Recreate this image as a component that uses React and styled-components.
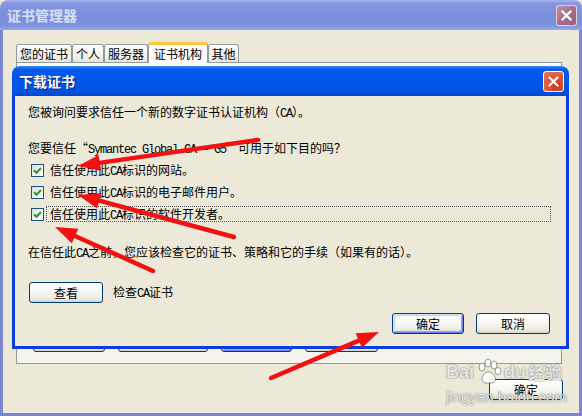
import React from 'react'
import styled, { createGlobalStyle } from 'styled-components'

const GlobalStyle = createGlobalStyle`
  html, body {
    margin: 0;
    padding: 0;
  }
  body {
    width: 582px;
    height: 416px;
    overflow: hidden;
    font-family: "Noto Sans CJK SC", "Noto Sans", sans-serif;
    font-size: 12px;
    color: #000;
  }
`

const Window = styled.div`
    position: relative;
    width: 582px;
    height: 416px;
    display: flex;
    flex-direction: column;
    background-color: #ECE9D8;
    overflow: hidden;
`
const TitleBar = styled.div`
    height: 30px;
    flex-shrink: 0;
    display: flex;
    align-items: center;
    justify-content: space-between;
    padding: 0 5px 0 7px;
    border-radius: 8px 8px 0 0;
    box-sizing: border-box;
    background: ${props => props.$active
        ? 'linear-gradient(to bottom, #3D8CF6 0%, #0A5CEA 10%, #0058EE 25%, #0055E5 60%, #0053E1 85%, #0046CC 100%)'
        : 'linear-gradient(to bottom, #AAB8EE 0%, #8597E1 10%, #7B8EDC 50%, #7E92DE 85%, #95A9EA 100%)'};
`
const TitleText = styled.span`
    font-size: 14px;
    font-weight: bold;
    color: ${props => props.$active ? '#FFFFFF' : '#D8E1F8'};
    text-shadow: ${props => props.$active ? '1px 1px 0 #0A1C83' : 'none'};
`
const CloseButton = styled.div`
    width: 21px;
    height: 21px;
    box-sizing: border-box;
    border: 1px solid ${props => props.$active ? '#FFFFFF' : 'rgba(255,255,255,0.65)'};
    border-radius: 3px;
    display: flex;
    align-items: center;
    justify-content: center;
    background: ${props => props.$active
        ? 'radial-gradient(circle at 70% 75%, #C83A1B 0%, #DD5535 50%, #E8805F 100%)'
        : 'linear-gradient(135deg, #C190A6 0%, #A86B88 55%, #97607E 100%)'};
`
const Frame = styled.div`
    flex: 1;
    display: flex;
    flex-direction: column;
    border: solid #7D86D3;
    border-width: 0 3px 3px 3px;
    padding: 12px 17px 0 13px;
`
const TabStrip = styled.div`
    display: flex;
    align-items: flex-end;
    height: 20px;
    position: relative;
    z-index: 1;
`
const Tab = styled.div`
    width: ${props => props.$w}px;
    height: ${props => props.$active ? 21 : 18}px;
    box-sizing: border-box;
    display: flex;
    align-items: center;
    justify-content: center;
    border: 1px solid #919B9C;
    border-bottom: none;
    border-top: ${props => props.$active ? '3px solid #FFC73C' : '1px solid #919B9C'};
    border-radius: 3px 3px 0 0;
    margin-bottom: ${props => props.$active ? -1 : 0}px;
    background: ${props => props.$active ? '#FCFCFE' : 'linear-gradient(to bottom, #FFFFFF 0%, #F3F2EE 60%, #E6E4DC 100%)'};
    font-size: 12px;
    line-height: 14px;
    padding-top: ${props => props.$active ? 0 : 1}px;
`
const Panel = styled.div`
    height: 302px;
    box-sizing: border-box;
    border: 1px solid #919B9C;
    background: linear-gradient(to bottom, #FCFCFE 0%, #F8F8F6 40%, #F4F3EE 100%);
    display: flex;
    align-items: flex-end;
    gap: 13px;
    padding: 0 0 11px 16px;
`
const Footer = styled.div`
    display: flex;
    justify-content: flex-end;
    padding-top: 15px;
    margin-right: -1px;
`
const Button = styled.div`
    width: ${props => props.$w}px;
    height: 21px;
    flex-shrink: 0;
    box-sizing: border-box;
    display: flex;
    align-items: center;
    justify-content: center;
    border: 1px solid #003C74;
    border-radius: 3px;
    font-size: 12px;
    line-height: 14px;
    background: linear-gradient(to bottom, #FFFFFF 0%, #F8F8F5 35%, #F0EFEA 75%, #E3E0D6 92%, #D6D0C5 100%);
    box-shadow: ${props => props.$default
        ? 'inset 1px 1px 0 #CEE7FF, inset -1px -1px 0 #6982EE, inset 2px 2px 0 #BCD4F6, inset -2px -2px 0 #8AAEE6'
        : 'none'};
`
const Dialog = styled.div`
    position: absolute;
    left: 12px;
    top: 66px;
    width: 557px;
    height: 283px;
    display: flex;
    flex-direction: column;
    z-index: 5;
`
const DialogFrame = styled.div`
    flex: 1;
    display: flex;
    flex-direction: column;
    background-color: #ECE9D8;
    border: solid #0A3DD9;
    border-width: 0 3px 3px 3px;
    padding: 9px 15px 0 13px;
`
const Para = styled.p`
    margin: ${props => props.$top || 0}px 0 0 0;
    height: 14px;
    flex-shrink: 0;
    line-height: 14px;
    white-space: nowrap;
`
const Latin = styled.span`
    font-family: "Liberation Mono", monospace;
    font-size: 12px;
    line-height: 1;
    letter-spacing: -1.2px;
`
const CheckList = styled.div`
    margin-top: 4px;
    display: flex;
    flex-direction: column;
    flex-shrink: 0;
`
const CheckRow = styled.div`
    height: 22px;
    flex-shrink: 0;
    display: flex;
    align-items: center;
    padding-left: 3px;
`
const Box = styled.div`
    width: 13px;
    height: 13px;
    box-sizing: border-box;
    border: 1px solid #1C5180;
    background: linear-gradient(135deg, #DCDCD7 0%, #F4F4F0 60%, #FFFFFF 100%);
    display: flex;
    align-items: center;
    justify-content: center;
`
const CheckLabel = styled.div`
    flex: 1;
    height: 16px;
    box-sizing: border-box;
    margin-left: 2px;
    padding: 0 3px;
    line-height: 14px;
    overflow: hidden;
    border: 1px dotted ${props => props.$focus ? '#555' : 'transparent'};
`
const ViewRow = styled.div`
    margin-top: 23px;
    height: 21px;
    flex-shrink: 0;
    display: flex;
    align-items: center;
    gap: 10px;
    padding-left: 1px;
    line-height: 14px;
`
const ActionRow = styled.div`
    margin-top: 10px;
    display: flex;
    justify-content: flex-end;
    gap: 12px;
    padding-right: 1px;
`
const Overlay = styled.svg`
    position: absolute;
    left: 0;
    top: 0;
    width: 582px;
    height: 416px;
    pointer-events: none;
    z-index: 10;
`
const Watermark = styled.div`
    position: absolute;
    left: 446px;
    top: 357px;
    z-index: 8;
    display: flex;
    flex-direction: column;
    color: rgba(255, 255, 255, 0.85);
    text-shadow: 0 0 1px rgba(90, 90, 90, 0.9), 0 0 2px rgba(120, 120, 120, 0.5);
    pointer-events: none;
`
const MarkTop = styled.div`
    display: flex;
    align-items: center;
    font-family: "Liberation Sans", sans-serif;
    font-weight: bold;
    font-size: 18px;
    line-height: 30px;
`
const MarkCn = styled.span`
    font-family: "Noto Sans CJK SC", sans-serif;
    font-size: 17px;
    font-weight: bold;
    margin-left: 2px;
`
const MarkUrl = styled.div`
    font-family: "Liberation Sans", sans-serif;
    font-size: 15px;
    line-height: 14px;
    margin-top: 3px;
`

const XIcon = () => (
    <svg width="11" height="11" viewBox="0 0 11 11">
        <path d="M1.5 1.5 L9.5 9.5 M9.5 1.5 L1.5 9.5" stroke="#fff" strokeWidth="2.2" strokeLinecap="square" />
    </svg>
)

const Check = () => (
    <svg width="9" height="9" viewBox="0 0 9 9">
        <path d="M1 4.2 L3.5 6.8 L8 2" stroke="#21A121" strokeWidth="2" fill="none" />
    </svg>
)

const Paw = () => (
    <svg width="30" height="30" viewBox="0 0 30 30">
        <g fill="rgba(255,255,255,0.85)" stroke="rgba(100,100,100,0.7)" strokeWidth="0.9">
            <ellipse cx="8" cy="10" rx="3" ry="4" />
            <ellipse cx="14" cy="6" rx="3" ry="4" />
            <ellipse cx="20" cy="8" rx="3" ry="4" />
            <ellipse cx="24" cy="14" rx="3" ry="3.5" />
            <path d="M8 22 C8 15 16 13 19 17 C22 20 23 26 17 26 C13 26 8 27 8 22 Z" />
        </g>
    </svg>
)

const arrows = [
    { from: [258, 140], to: [78, 166] },
    { from: [234, 237], to: [78, 195] },
    { from: [153, 271], to: [55, 227] },
    { from: [271, 378], to: [379, 332] },
]

const Arrow = ({ from, to }) => {
    const dx = to[0] - from[0]
    const dy = to[1] - from[1]
    const len = Math.sqrt(dx * dx + dy * dy)
    const ux = dx / len
    const uy = dy / len
    const headLen = 22
    const half = 8
    const bx = to[0] - ux * headLen
    const by = to[1] - uy * headLen
    const p1 = [bx - uy * half, by + ux * half]
    const p2 = [bx + uy * half, by - ux * half]
    return (
        <g>
            <line x1={from[0]} y1={from[1]} x2={bx + ux * 2} y2={by + uy * 2} stroke="#F21010" strokeWidth="4.5" strokeLinecap="round" />
            <polygon points={`${to[0]},${to[1]} ${p1[0]},${p1[1]} ${p2[0]},${p2[1]}`} fill="#F21010" />
        </g>
    )
}

const tabs = [
    { label: '您的证书', w: 56 },
    { label: '个人', w: 32 },
    { label: '服务器', w: 44 },
    { label: '证书机构', w: 60, active: true },
    { label: '其他', w: 31 },
]

const purposes = [
    '的网站。',
    '的电子邮件用户。',
    '的软件开发者。',
]

const App = () => {
  return (
    <Window>
        <GlobalStyle />
        <TitleBar>
            <TitleText>证书管理器</TitleText>
            <CloseButton><XIcon /></CloseButton>
        </TitleBar>
        <Frame>
            <TabStrip>
                {tabs.map(t => (
                    <Tab key={t.label} $w={t.w} $active={t.active}>{t.label}</Tab>
                ))}
            </TabStrip>
            <Panel>
                <Button $w={72}>导入</Button>
                <Button $w={90}>导出</Button>
                <Button $w={71} $default>删除</Button>
                <Button $w={73}>高级</Button>
            </Panel>
            <Footer>
                <Button $w={74}>确定</Button>
            </Footer>
        </Frame>

        <Dialog>
            <TitleBar $active>
                <TitleText $active>下载证书</TitleText>
                <CloseButton $active><XIcon /></CloseButton>
            </TitleBar>
            <DialogFrame>
                <Para>您被询问要求信任一个新的数字证书认证机构（<Latin>CA</Latin>）。</Para>
                <Para $top={22}>您要信任“<Latin>Symantec Global CA – G5</Latin>”可用于如下目的吗？</Para>
                <CheckList>
                    {purposes.map((p, i) => (
                        <CheckRow key={p}>
                            <Box><Check /></Box>
                            <CheckLabel $focus={i === 2}>信任使用此<Latin>CA</Latin>标识{p}</CheckLabel>
                        </CheckRow>
                    ))}
                </CheckList>
                <Para $top={20}>在信任此<Latin>CA</Latin>之前，您应该检查它的证书、策略和它的手续（如果有的话）。</Para>
                <ViewRow>
                    <Button $w={74}>查看</Button>
                    <span>检查<Latin>CA</Latin>证书</span>
                </ViewRow>
                <ActionRow>
                    <Button $w={72} $default>确定</Button>
                    <Button $w={74}>取消</Button>
                </ActionRow>
            </DialogFrame>
        </Dialog>

        <Watermark>
            <MarkTop>Bai<Paw />du<MarkCn>经验</MarkCn></MarkTop>
            <MarkUrl>jingyan.baidu.com</MarkUrl>
        </Watermark>

        <Overlay viewBox="0 0 582 416">
            {arrows.map((a, i) => <Arrow key={i} from={a.from} to={a.to} />)}
        </Overlay>
    </Window>
  )
}

export default App
